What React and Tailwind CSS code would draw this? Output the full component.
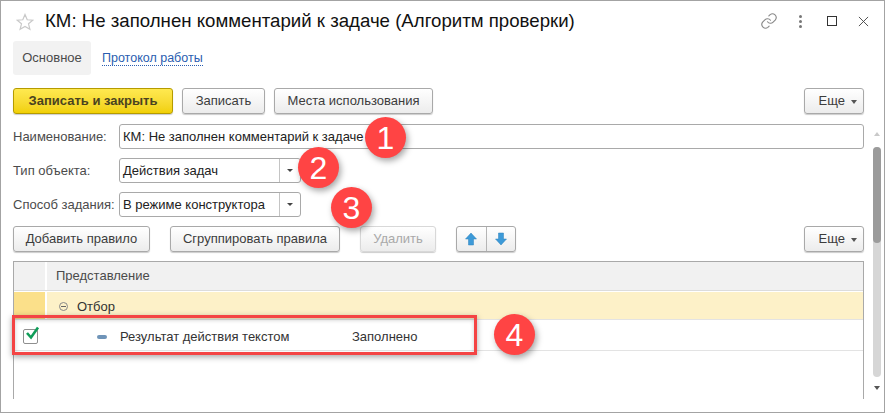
import React from 'react';

const Btn = ({ children, className = '', disabled }) => (
  <button
    type="button"
    className={`h-[26px] shrink-0 rounded-[3px] border bg-gradient-to-b from-white to-[#ececec] text-[13px] shadow-[0_1px_1px_rgba(0,0,0,0.2)] ${
      disabled ? 'border-[#d8d8d8] text-[#a9a9a9]' : 'border-[#a9a9a9] text-[#3c3c3c]'
    } ${className}`}
  >
    {children}
  </button>
);

const More = () => (
  <Btn className="ml-auto flex w-[60px] items-center justify-end gap-[6px] pr-[6px]">
    Еще
    <span className="mt-[1px] h-0 w-0 border-x-[3.5px] border-t-[4px] border-x-transparent border-t-[#555]" />
  </Btn>
);

const Caret = () => <span className="h-0 w-0 border-x-[3px] border-t-[3px] border-x-transparent border-t-[#444]" />;

const Select = ({ value }) => (
  <div className="flex h-[25px] w-[182px] items-center rounded-[3px] border border-[#a9a9a9] bg-white text-[13px] text-[#222]">
    <span className="flex-1 pl-[3px]">{value}</span>
    <span className="flex h-full w-[21px] items-center justify-center border-l border-[#c4c4c4]">
      <Caret />
    </span>
  </div>
);

const Label = ({ children }) => <span className="w-[106px] shrink-0 text-[13px] text-[#4b4b4b]">{children}</span>;

const Badge = ({ n, className }) => (
  <span
    className={`absolute flex h-[41px] w-[41px] items-center justify-center rounded-full bg-[#ff4444] text-[32px] leading-none text-white shadow-[2px_3px_6px_rgba(0,0,0,0.35)] ${className}`}
  >
    {n}
  </span>
);

const Arrow = ({ down }) => (
  <svg width="12" height="14" viewBox="0 0 12 14" className={down ? 'rotate-180' : ''}>
    <path d="M6 1 11.5 7H8.5V13H3.5V7H.5Z" fill="#3d9ad8" stroke="#2f83bd" strokeWidth=".5" />
  </svg>
);

export default function App() {
  return (
    <div className="relative flex h-[413px] w-[885px] overflow-hidden border border-[#a3a3a3] bg-white font-['Liberation_Sans',Arial,sans-serif]">
      <div className="flex min-w-0 flex-1 flex-col pl-[12px] pr-[7px]">
        {/* title */}
        <div className="flex h-[40px] items-center">
          <svg width="18" height="18" viewBox="0 0 18 18" className="ml-[3px] mt-[2px] shrink-0">
            <path d="M9 1.5 11.2 6.8 16.8 7.2 12.5 10.8 13.9 16.3 9 13.4 4.1 16.3 5.5 10.8 1.2 7.2 6.8 6.8Z" fill="none" stroke="#c9c9c9" strokeWidth="1.2" />
          </svg>
          <span className="ml-[11px] text-[18.65px] text-[#111]">КМ: Не заполнен комментарий к задаче (Алгоритм проверки)</span>
          <div className="ml-auto mr-[-5px] flex items-center">
            <svg width="18" height="18" viewBox="0 0 24 24" fill="none" stroke="#8a8a8a" strokeWidth="1.5" strokeLinecap="round">
              <path d="M10 13a5 5 0 0 0 7.5.5l3-3a5 5 0 0 0-7-7l-1.7 1.7" />
              <path d="M14 11a5 5 0 0 0-7.5-.5l-3 3a5 5 0 0 0 7 7l1.7-1.7" />
            </svg>
            <span className="ml-[21px] flex flex-col gap-[2px]">
              <span className="h-[3px] w-[3px] rounded-full bg-[#777]" />
              <span className="h-[3px] w-[3px] rounded-full bg-[#777]" />
              <span className="h-[3px] w-[3px] rounded-full bg-[#777]" />
            </span>
            <span className="ml-[25px] h-[10px] w-[10px] border border-[#333]" />
            <svg width="11" height="11" viewBox="0 0 12 12" className="ml-[21px]" stroke="#444" strokeWidth="1">
              <path d="M1 1 11 11M11 1 1 11" />
            </svg>
          </div>
        </div>

        {/* tabs */}
        <div className="flex h-[34px] items-center">
          <span className="flex h-full w-[78px] items-center justify-center rounded-[3px] bg-[#f2f2f2] text-[13px] text-[#4b4b4b]">Основное</span>
          <a className="ml-[11px] border-b border-dotted border-[#2a5db0] text-[12.5px] leading-[14px] text-[#2a5db0]">Протокол работы</a>
        </div>

        {/* command bar */}
        <div className="mt-[13px] flex gap-[9px]">
          <button
            type="button"
            className="h-[26px] w-[160px] rounded-[3px] border border-[#b59b00] bg-gradient-to-b from-[#ffe94f] to-[#f1d000] text-[13px] font-bold text-[#4a4320] shadow-[0_1px_1px_rgba(0,0,0,0.2)]"
          >
            Записать и закрыть
          </button>
          <Btn className="w-[83px]">Записать</Btn>
          <Btn className="w-[159px]">Места использования</Btn>
          <More />
        </div>

        {/* fields */}
        <div className="mt-[10px] flex items-center">
          <Label>Наименование:</Label>
          <div className="flex h-[25px] flex-1 items-center rounded-[3px] border border-[#a9a9a9] pl-[3px] text-[13px] text-[#222]">
            КМ: Не заполнен комментарий к задаче
          </div>
        </div>
        <div className="mt-[9px] flex items-center">
          <Label>Тип объекта:</Label>
          <Select value="Действия задач" />
        </div>
        <div className="mt-[9px] flex items-center">
          <Label>Способ задания:</Label>
          <Select value="В режиме конструктора" />
        </div>

        {/* rules toolbar */}
        <div className="mt-[9px] flex">
          <Btn className="w-[137px]">Добавить правило</Btn>
          <Btn className="ml-[20px] w-[170px]">Сгруппировать правила</Btn>
          <Btn className="ml-[20px] w-[76px]" disabled>Удалить</Btn>
          <div className="ml-[20px] flex h-[26px] w-[60px] rounded-[3px] border border-[#a9a9a9] bg-gradient-to-b from-white to-[#ececec] shadow-[0_1px_1px_rgba(0,0,0,0.2)]">
            <span className="flex flex-1 items-center justify-center border-r border-[#b5b5b5]"><Arrow /></span>
            <span className="flex flex-1 items-center justify-center"><Arrow down /></span>
          </div>
          <More />
        </div>

        {/* table */}
        <div className="mt-[9px] h-[138px] border-x border-t border-[#a9a9a9] text-[13px] text-[#333]">
          <div className="flex h-[29px] border-b border-[#dcdcdc] bg-[#f1f1f1]">
            <div className="w-[33px] border-r-2 border-white" />
            <div className="flex items-center pl-[9px] text-[#4b4b4b]">Представление</div>
          </div>
          <div className="mt-[1px] flex h-[27px] bg-[#fdf1c8]">
            <div className="w-[33px] border-r-2 border-white bg-[#fbe08a]" />
            <div className="flex items-center pl-[12px] pt-[2px]">
              <span className="flex h-[9px] w-[9px] items-center justify-center rounded-full border border-[#888]">
                <span className="h-[1px] w-[5px] bg-[#666]" />
              </span>
              <span className="ml-[9px]">Отбор</span>
            </div>
          </div>
          <div className="flex h-[32px] items-center border-y border-[#e3e3e3] pt-[2px]">
            <span className="relative ml-[9px] h-[15px] w-[15px] rounded-[2px] border border-[#8f8f8f]">
              <svg width="15" height="14" viewBox="0 0 15 14" className="absolute left-[1px] top-[-4px]">
                <path d="M2 7 6 11.5 13 1.5" fill="none" stroke="#0f9d58" strokeWidth="2.6" />
              </svg>
            </span>
            <span className="ml-[59px] mt-[2px] h-[4px] w-[10px] rounded-[2px] bg-[#6f94b8]" />
            <span className="ml-[13px] w-[232px] pt-[2px]">Результат действия текстом</span>
            <span className="pt-[2px]">Заполнено</span>
          </div>
        </div>
      </div>

      {/* scrollbar */}
      <div className="mr-[1px] flex w-[12px] flex-col items-center pt-[131px]">
        <span className="h-0 w-0 border-x-[3px] border-b-[4px] border-x-transparent border-b-[#c9c9c9]" />
        <div className="mt-[11px] h-[230px] w-[8px] rounded-[4px] bg-[#d6d6d6]">
          <div className="h-[96px] rounded-[4px] bg-[#9b9b9b]" />
        </div>
        <span className="mt-[9px] h-0 w-0 border-x-[3px] border-t-[4px] border-x-transparent border-t-[#555]" />
      </div>

      {/* callouts */}
      <div className="absolute left-[11px] top-[314px] h-[40px] w-[465px] border-[3px] border-[#f44444] shadow-[0_2px_6px_rgba(0,0,0,0.35),inset_0_2px_4px_rgba(0,0,0,0.2)]" />
      <Badge n="1" className="left-[364px] top-[116px]" />
      <Badge n="2" className="left-[297px] top-[146px]" />
      <Badge n="3" className="left-[330px] top-[186px]" />
      <Badge n="4" className="left-[493px] top-[313px]" />
    </div>
  );
}
